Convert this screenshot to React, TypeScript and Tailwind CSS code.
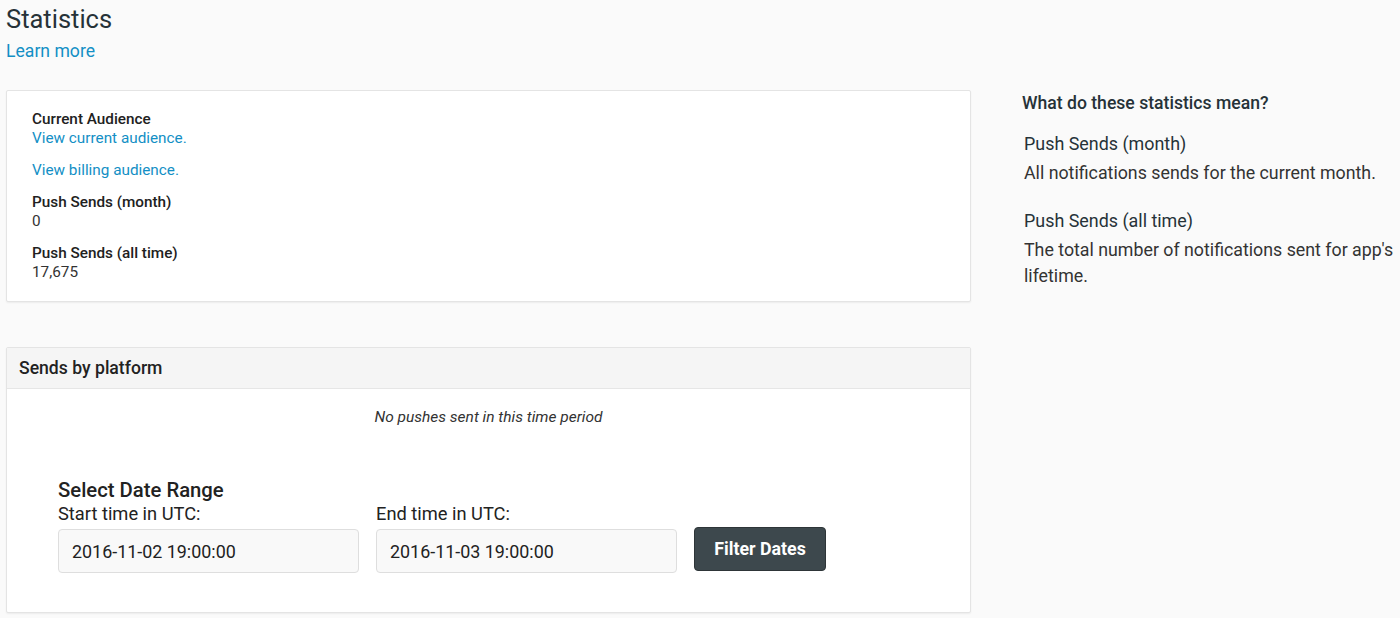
import React from 'react';

const font = { fontFamily: 'Roboto, "Noto Sans", sans-serif' };

function Stat({ label, value, last }: { label: string; value: string; last?: boolean }) {
  return (
    <div className={last ? '' : 'mb-[13px]'}>
      <div className="text-[15.3px] leading-[19px] font-medium text-[#212121]">{label}</div>
      <div className="text-[15.3px] leading-[19px] text-[#333]">{value}</div>
    </div>
  );
}

function DateField({ label, value }: { label: string; value: string }) {
  return (
    <div className="flex flex-col">
      <label className="text-[18.3px] leading-[24px] text-[#222] mb-[3px]">{label}</label>
      <input
        readOnly
        value={value}
        className="w-[301px] h-[44px] px-[13px] rounded-[4px] border border-[#dedede] bg-[#f9f9f9] text-[17.9px] text-[#222] outline-none"
      />
    </div>
  );
}

export default function App() {
  return (
    <div className="min-h-[618px] bg-[#fafafa] pl-[6px] text-[#222]" style={font}>
      <h1 className="text-[25.5px] leading-[38px] font-normal text-[#263238]">Statistics</h1>
      <a href="#" className="block text-[17.6px] leading-[26px] text-[#138fc5]">Learn more</a>

      <div className="flex mt-[26px]">
        <div className="w-[965px] shrink-0">
          <div className="bg-white border border-[#e4e4e4] rounded-[2px] shadow-[0_1px_2px_rgba(0,0,0,0.06)] pl-[25px] pt-[19px] pb-[19px]">
            <div className="mb-[13px]">
              <div className="text-[15.3px] leading-[19px] font-medium text-[#212121]">Current Audience</div>
              <a href="#" className="block text-[15.3px] leading-[19px] text-[#138fc5]">View current audience.</a>
            </div>
            <a href="#" className="block mb-[13px] text-[15.3px] leading-[19px] text-[#138fc5]">View billing audience.</a>
            <Stat label="Push Sends (month)" value="0" />
            <Stat label="Push Sends (all time)" value="17,675" last />
          </div>

          <div className="mt-[45px] bg-white border border-[#e4e4e4] rounded-[2px] shadow-[0_1px_2px_rgba(0,0,0,0.06)]">
            <div className="h-[41px] bg-[#f5f5f5] border-b border-[#e6e6e6] px-[12px] flex items-center text-[17.6px] font-medium text-[#222]">
              Sends by platform
            </div>
            <div className="pt-[18px] text-center text-[15.5px] italic leading-[20px] text-[#333]">
              No pushes sent in this time period
            </div>
            <div className="pl-[51px] pt-[51px] pb-[39px]">
              <div className="text-[20.3px] leading-[24px] font-medium text-[#222]">Select Date Range</div>
              <div className="flex items-end gap-[17px]">
                <DateField label="Start time in UTC:" value="2016-11-02 19:00:00" />
                <DateField label="End time in UTC:" value="2016-11-03 19:00:00" />
                <button className="mb-[2px] w-[132px] h-[44px] rounded-[4px] bg-[#3d484d] border border-[#2e3538] text-white text-[17.8px] font-bold">
                  Filter Dates
                </button>
              </div>
            </div>
          </div>
        </div>

        <div className="ml-[51px] w-[378px] pt-[1px]">
          <div className="text-[17.6px] leading-[24px] font-medium text-[#263238]">What do these statistics mean?</div>
          <div className="mt-[16px] pl-[2px]">
            <div className="text-[17.9px] leading-[26px] text-[#263238]">Push Sends (month)</div>
            <div className="mt-[3px] text-[17.8px] leading-[26px] text-[#333]">All notifications sends for the current month.</div>
            <div className="mt-[22px] text-[17.9px] leading-[26px] text-[#263238]">Push Sends (all time)</div>
            <div className="mt-[3px] text-[17.8px] leading-[26px] text-[#333]">The total number of notifications sent for app's lifetime.</div>
          </div>
        </div>
      </div>
    </div>
  );
}
